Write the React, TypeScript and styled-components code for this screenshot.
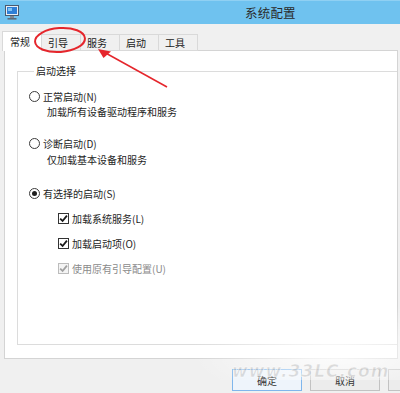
import React from "react";
import styled, { createGlobalStyle } from "styled-components";

const Global = createGlobalStyle`
  html, body { margin: 0; padding: 0; background: #f0f0f0; }
  body { width: 400px; height: 393px; overflow: hidden; }
  * { box-sizing: border-box; }
`;

const FONT = `"Noto Sans CJK SC", "Noto Sans", sans-serif`;

const Window = styled.div`
  position: relative;
  width: 400px;
  height: 393px;
  background: #f0f0f0;
  font-family: ${FONT};
  font-size: 10px;
  color: #1e1e1e;
  display: flex;
  flex-direction: column;
  overflow: hidden;
`;

const TitleBar = styled.div`
  height: 24px;
  flex: none;
  background: #6fc2ef;
  border-top: 1px solid #8fd0f3;
  display: flex;
  align-items: center;
  padding-left: 5px;
`;

const Title = styled.div`
  margin-left: 226px;
  font-size: 12.5px;
  line-height: 16px;
  color: #2a2a2a;
  letter-spacing: 0.2px;
`;

const Body = styled.div`
  flex: 1;
  display: flex;
  flex-direction: column;
  padding: 7px 2px 0 4px;
`;

const TabStrip = styled.div`
  display: flex;
  align-items: flex-end;
  height: 20px;
  margin-left: -1px;
  position: relative;
  z-index: 1;
`;

const Tab = styled.div<{ $active?: boolean }>`
  width: 40px;
  height: ${(p) => (p.$active ? 20 : 17)}px;
  padding-left: ${(p) => (p.$active ? 7 : 6)}px;
  display: flex;
  align-items: center;
  line-height: 14px;
  font-size: 10px;
  background: ${(p) => (p.$active ? "#ffffff" : "#f0f0f0")};
  border: 1px solid #d9d9d9;
  border-bottom: ${(p) => (p.$active ? "none" : "1px solid #d9d9d9")};
  margin-left: -1px;
  padding-top: ${(p) => (p.$active ? 1 : 0)}px;
  color: #1a1a1a;
`;

const Panel = styled.div`
  height: 309px;
  margin-top: -1px;
  background: #ffffff;
  border: 1px solid #d4d4d4;
  padding: 13px 0 0 12px;
  display: flex;
  flex-direction: column;
`;

const Group = styled.fieldset`
  margin: 0;
  height: 281px;
  border: 1px solid #dcdcdc;
  border-right: none;
  padding: 11px 0 0 11px;
  display: flex;
  flex-direction: column;
`;

const Legend = styled.legend`
  padding: 0 2px;
  margin-left: 5px;
  line-height: 14px;
  font-size: 10px;
  color: #222;
`;

const Row = styled.div<{ $gap?: number; $indent?: number; $disabled?: boolean }>`
  display: flex;
  align-items: center;
  height: 15px;
  line-height: 15px;
  margin-top: ${(p) => p.$gap ?? 0}px;
  padding-left: ${(p) => p.$indent ?? 0}px;
  color: ${(p) => (p.$disabled ? "#8a8a8a" : "#1e1e1e")};
  white-space: nowrap;
`;

const Radio = styled.span<{ $checked?: boolean }>`
  width: 11px;
  height: 11px;
  border-radius: 50%;
  border: 1px solid #3c3c3c;
  background: #fff;
  margin-right: 3px;
  display: flex;
  align-items: center;
  justify-content: center;
  flex: none;
  &::after {
    content: "";
    width: 5px;
    height: 5px;
    border-radius: 50%;
    background: ${(p) => (p.$checked ? "#1e1e1e" : "transparent")};
  }
`;

const Box = styled.span<{ $disabled?: boolean }>`
  width: 11px;
  height: 11px;
  border: 1px solid ${(p) => (p.$disabled ? "#bcbcbc" : "#333")};
  background: ${(p) => (p.$disabled ? "#f4f4f4" : "#fff")};
  margin-right: 3px;
  display: flex;
  align-items: center;
  justify-content: center;
  flex: none;
`;

const ButtonRow = styled.div`
  display: flex;
  gap: 8px;
  padding-left: 228px;
  margin-top: 10px;
`;

const Button = styled.div<{ $default?: boolean }>`
  width: 70px;
  height: 22px;
  flex: none;
  display: flex;
  align-items: center;
  justify-content: center;
  font-size: 10px;
  color: #333;
  background: ${(p) => (p.$default ? "#eef4fb" : "#ececec")};
  border: 1px solid ${(p) => (p.$default ? "#7fb6ec" : "#c2c2c2")};
`;

const Overlay = styled.svg`
  position: absolute;
  left: 0;
  top: 0;
  z-index: 3;
  pointer-events: none;
`;

const Watermark = styled.div`
  position: absolute;
  z-index: 2;
  left: 232px;
  top: 361px;
  font-family: "DejaVu Sans", sans-serif;
  font-weight: bold;
  font-style: italic;
  font-size: 17px;
  letter-spacing: 1px;
  color: rgba(170, 170, 170, 0.4);
  -webkit-text-stroke: 0.6px rgba(255, 255, 255, 0.8);
  pointer-events: none;
`;

const Glow = styled.div`
  position: absolute;
  z-index: 2;
  left: 190px;
  top: 300px;
  width: 240px;
  height: 80px;
  background: radial-gradient(ellipse at 60% 65%, rgba(255,255,255,0.85), rgba(255,255,255,0) 70%);
  pointer-events: none;
`;

const Check = ({ color }: { color: string }) => (
  <svg width="9" height="9" viewBox="0 0 10 10">
    <path d="M1.3 5.2 L4 7.8 L8.8 1.8" fill="none" stroke={color} strokeWidth="2" />
  </svg>
);

const AppIcon = () => (
  <svg width="14" height="15" viewBox="0 0 14 15">
    <rect x="0.5" y="0.5" width="13" height="10" fill="#e8eef5" stroke="#4a5a6e" />
    <rect x="2" y="2" width="10" height="7" fill="#2f7fd6" />
    <rect x="3" y="3" width="4" height="3" fill="#7fc4f5" />
    <rect x="5" y="11" width="4" height="2" fill="#7d8794" />
    <rect x="2.5" y="13" width="9" height="1.6" fill="#5d6a78" />
  </svg>
);

export default function App() {
  return (
    <>
      <Global />
      <Window>
        <TitleBar>
          <AppIcon />
          <Title>系统配置</Title>
        </TitleBar>
        <Body>
          <TabStrip>
            <Tab $active>常规</Tab>
            <Tab>引导</Tab>
            <Tab>服务</Tab>
            <Tab>启动</Tab>
            <Tab>工具</Tab>
          </TabStrip>
          <Panel>
            <Group>
              <Legend>启动选择</Legend>
              <Row>
                <Radio />
                正常启动(N)
              </Row>
              <Row $indent={18}>加载所有设备驱动程序和服务</Row>
              <Row $gap={17}>
                <Radio />
                诊断启动(D)
              </Row>
              <Row $indent={18} $gap={1}>仅加载基本设备和服务</Row>
              <Row $gap={19}>
                <Radio $checked />
                有选择的启动(S)
              </Row>
              <Row $indent={29} $gap={10}>
                <Box>
                  <Check color="#1a1a1a" />
                </Box>
                加载系统服务(L)
              </Row>
              <Row $indent={29} $gap={10}>
                <Box>
                  <Check color="#1a1a1a" />
                </Box>
                加载启动项(O)
              </Row>
              <Row $indent={29} $gap={10} $disabled>
                <Box $disabled>
                  <Check color="#a0a0a0" />
                </Box>
                使用原有引导配置(U)
              </Row>
            </Group>
          </Panel>
          <ButtonRow>
            <Button $default>确定</Button>
            <Button>取消</Button>
            <Button>应用(A)</Button>
          </ButtonRow>
        </Body>
        <Glow />
        <Watermark>www.33LC.com</Watermark>
        <Overlay width="400" height="393" viewBox="0 0 400 393">
          <ellipse
            cx="60"
            cy="40"
            rx="25"
            ry="12"
            transform="rotate(-4 60 40)"
            fill="none"
            stroke="#e5262c"
            strokeWidth="2"
          />
          <path d="M167 87 L102 51" stroke="#e5262c" strokeWidth="1.5" fill="none" />
          <path d="M98 49 L111 51.5 L103.5 58 Z" fill="#e5262c" />
        </Overlay>
      </Window>
    </>
  );
}
